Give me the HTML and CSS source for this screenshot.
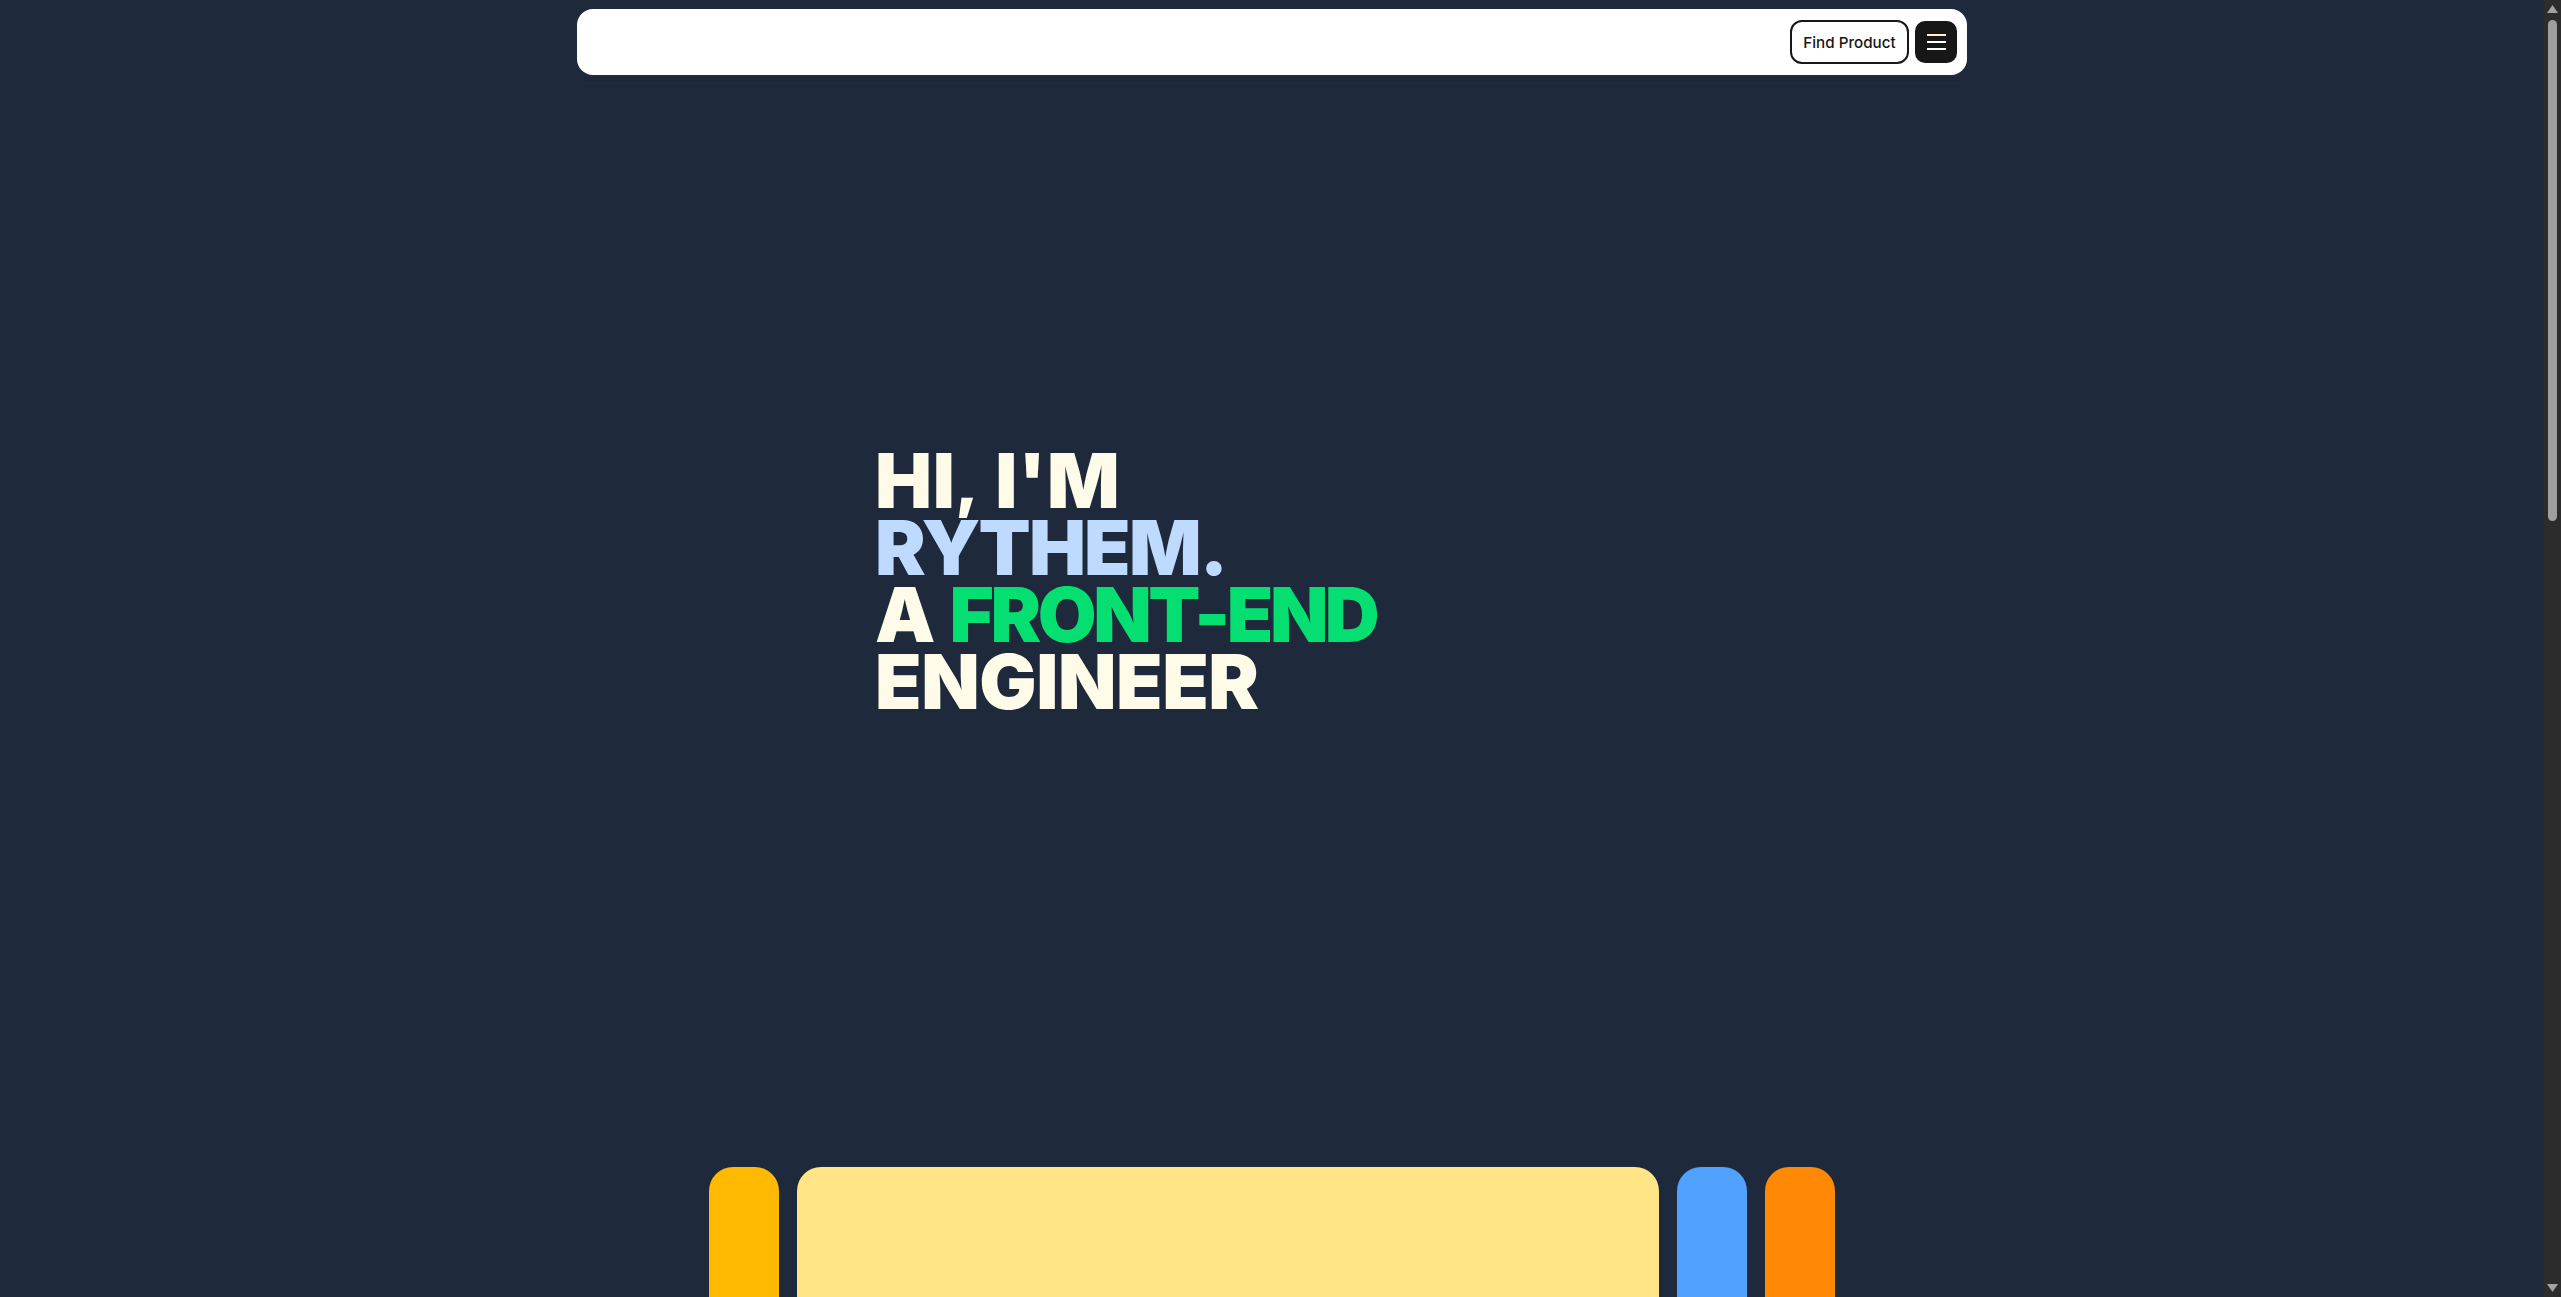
FILE: index.html
```html
<!DOCTYPE html>
<html lang="en">
<head>
  <meta charset="UTF-8" />
  <title>Rythem</title>
  <meta name="viewport" content="width=device-width, initial-scale=1" />
  <link rel="stylesheet" href="styles.css">
</head>
<body>
  <div class="shell">
    <div class="page">
      <!-- Top bar -->
      <nav class="navbar">
        <a href="#" class="find-btn">Find Product</a>
        <button class="menu-btn" aria-label="Menu">
          <span></span>
          <span></span>
          <span></span>
        </button>
      </nav>

      <!-- Hero -->
      <section class="hero">
        <h1 class="hero-title">
          <span class="line line-1">Hi<span class="comma">,</span> I'm</span>
          <span class="line line-2 blue">Rythem.</span>
          <span class="line line-3">A <span class="green">Front-End</span></span>
          <span class="line line-4">Engineer</span>
        </h1>
      </section>

      <!-- Color cards -->
      <section class="cards">
        <div class="card card-amber"></div>
        <div class="card card-yellow"></div>
        <div class="card card-blue"></div>
        <div class="card card-orange"></div>
      </section>
    </div>

    <!-- Scrollbar -->
    <div class="scrollbar">
      <svg class="arrow" viewBox="0 0 11 8" width="11" height="8"><path d="M5.5 0 11 8H0z" /></svg>
      <div class="thumb"></div>
      <svg class="arrow arrow-down" viewBox="0 0 11 8" width="11" height="8"><path d="M0 0h11L5.5 8z" /></svg>
    </div>
  </div>
</body>
</html>
```

FILE: styles.css
```css
body {
  margin: 0;
  background: #1e293b;
  font-family: "Inter", sans-serif;
}

.shell {
  display: flex;
  height: 100vh;
  overflow: hidden;
}

.page {
  flex: 1;
  min-width: 0;
  overflow: hidden;
  padding-top: 9px;
}

.scrollbar {
  flex: none;
  box-sizing: border-box;
  width: 17px;
  padding: 5px 0;
  display: flex;
  flex-direction: column;
  align-items: center;
  background: #2c2c2c;
}

.arrow {
  flex: none;
  display: block;
  fill: #a3a3a3;
}

.arrow-down {
  margin-top: auto;
}

.thumb {
  width: 9px;
  height: 501px;
  margin-top: 7px;
  border-radius: 5px;
  background: #9f9f9f;
}

.navbar {
  position: relative;
  box-sizing: border-box;
  width: 1390px;
  height: 66px;
  margin: 0 auto;
  padding: 0 10px;
  display: flex;
  justify-content: flex-end;
  align-items: center;
  gap: 6px;
  background: #fff;
  border-radius: 16px;
}

/* faint dotted line under the bar */
.navbar::after {
  content: "";
  position: absolute;
  left: 8px;
  right: 8px;
  top: 68px;
  height: 4px;
  background:
    repeating-linear-gradient(90deg, #141c28 0 1px, transparent 1px 4px) top / 100% 1px no-repeat,
    repeating-linear-gradient(90deg, #141c28 0 1px, transparent 1px 4px) bottom / 100% 1px no-repeat;
}

.find-btn {
  box-sizing: border-box;
  width: 119px;
  height: 44px;
  display: flex;
  align-items: center;
  justify-content: center;
  border: 2px solid #171717;
  border-radius: 12px;
  color: #171717;
  font-size: 15.2px;
  font-weight: 500;
  text-decoration: none;
}

.menu-btn {
  width: 42px;
  height: 42px;
  padding: 0;
  display: flex;
  flex-direction: column;
  align-items: center;
  justify-content: center;
  gap: 5px;
  border: 0;
  border-radius: 10px;
  background: #171717;
}

.menu-btn span {
  display: block;
  width: 19px;
  height: 2px;
  background: #fff;
}

.menu-btn span:first-child {
  background: #fef3c7;
}

.hero {
  height: 1092px;
  display: flex;
  align-items: center;
  padding-left: 875px;
}

.hero-title {
  margin: 0 0 80px;
  font-family: "Inter", sans-serif;
  font-size: 76px;
  font-weight: 900;
  line-height: 67px;
  text-transform: uppercase;
  color: #fefce8;
}

.line {
  display: block;
  white-space: nowrap;
}

.line-1 {
  letter-spacing: 0.7px;
}

.comma {
  font-size: 62px;
  line-height: 0;
  vertical-align: 3px;
}

.line-2 {
  letter-spacing: -1.8px;
}

.line-3 {
  letter-spacing: -3.5px;
  word-spacing: 6px;
}

.line-4 {
  letter-spacing: -0.4px;
}

.blue {
  color: #bedbff;
}

.green {
  color: #05df72;
}

.cards {
  display: flex;
  justify-content: center;
  gap: 18px;
  height: 2100px;
}

.card {
  width: 70px;
  height: 100%;
  border-radius: 24px;
}

.card-amber {
  background: #ffb900;
}

.card-yellow {
  width: 862px;
  background: #ffe585;
}

.card-blue {
  background: #51a2ff;
}

.card-orange {
  background: #ff8904;
}
```
